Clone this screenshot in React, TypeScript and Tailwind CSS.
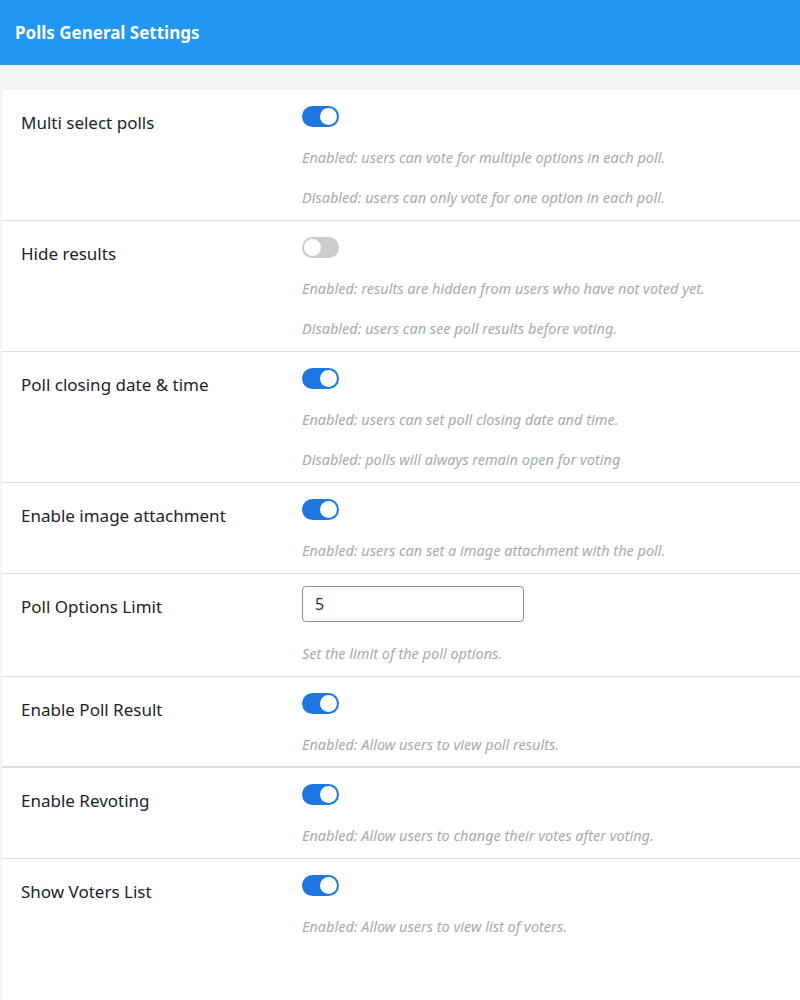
import { useState } from 'react';

type Setting = {
  label: string;
  kind: 'toggle' | 'number';
  on?: boolean;
  value?: string;
  notes: string[];
  thickBorder?: boolean;
};

const settings: Setting[] = [
  {
    label: 'Multi select polls',
    kind: 'toggle',
    on: true,
    notes: [
      'Enabled: users can vote for multiple options in each poll.',
      'Disabled: users can only vote for one option in each poll.',
    ],
  },
  {
    label: 'Hide results',
    kind: 'toggle',
    on: false,
    notes: [
      'Enabled: results are hidden from users who have not voted yet.',
      'Disabled: users can see poll results before voting.',
    ],
  },
  {
    label: 'Poll closing date & time',
    kind: 'toggle',
    on: true,
    notes: [
      'Enabled: users can set poll closing date and time.',
      'Disabled: polls will always remain open for voting',
    ],
  },
  {
    label: 'Enable image attachment',
    kind: 'toggle',
    on: true,
    notes: ['Enabled: users can set a image attachment with the poll.'],
  },
  {
    label: 'Poll Options Limit',
    kind: 'number',
    value: '5',
    notes: ['Set the limit of the poll options.'],
  },
  {
    label: 'Enable Poll Result',
    kind: 'toggle',
    on: true,
    notes: ['Enabled: Allow users to view poll results.'],
    thickBorder: true,
  },
  {
    label: 'Enable Revoting',
    kind: 'toggle',
    on: true,
    notes: ['Enabled: Allow users to change their votes after voting.'],
  },
  {
    label: 'Show Voters List',
    kind: 'toggle',
    on: true,
    notes: ['Enabled: Allow users to view list of voters.'],
  },
];

function Toggle({ initial }: { initial: boolean }) {
  const [on, setOn] = useState(initial);
  return (
    <button
      type="button"
      onClick={() => setOn(!on)}
      className={
        on
          ? 'flex h-[21px] w-[37px] items-center justify-end rounded-full bg-[#1e77e1] px-[2px]'
          : 'flex h-[21px] w-[37px] items-center justify-start rounded-full bg-[#cccccc] px-[2px]'
      }
    >
      <span className="block h-[17px] w-[17px] rounded-full bg-white" />
    </button>
  );
}

function Row({ s, last }: { s: Setting; last: boolean }) {
  const isNumber = s.kind === 'number';
  let border = 'border-b border-[#dedede] pb-[13px]';
  if (s.thickBorder) border = 'border-b-2 border-[#dedede] pb-3';
  if (last) border = 'pb-16';
  return (
    <div className={`flex ${border}`}>
      <div className="w-[300px] shrink-0 pl-[19px] pt-[21px] text-[17px] leading-6 text-[#1d2327]">
        {s.label}
      </div>
      <div className={isNumber ? 'flex-1 pt-3' : 'flex-1 pt-4'}>
        {isNumber ? (
          <input
            defaultValue={s.value}
            className="h-9 w-[222px] rounded border border-[#8c8f94] px-3 text-[16px] text-[#2c3338] outline-none"
          />
        ) : (
          <Toggle initial={!!s.on} />
        )}
        <div className={isNumber ? 'mt-[21px] flex flex-col gap-5' : 'mt-5 flex flex-col gap-5'}>
          {s.notes.map((n) => (
            <p key={n} className="text-[14.5px] italic leading-5 text-[#a7aaad]">
              {n}
            </p>
          ))}
        </div>
      </div>
    </div>
  );
}

export default function App() {
  return (
    <div className="min-h-screen bg-[#f3f3f3]" style={{ fontFamily: '"Noto Sans", "Open Sans", sans-serif' }}>
      <div className="flex h-[65px] items-center bg-[#2196f3] px-[15px]">
        <h1 className="text-[17px] font-bold text-white">Polls General Settings</h1>
      </div>
      <div className="ml-[2px] mt-[25px] bg-white">
        {settings.map((s, i) => (
          <Row key={s.label} s={s} last={i === settings.length - 1} />
        ))}
      </div>
    </div>
  );
}
